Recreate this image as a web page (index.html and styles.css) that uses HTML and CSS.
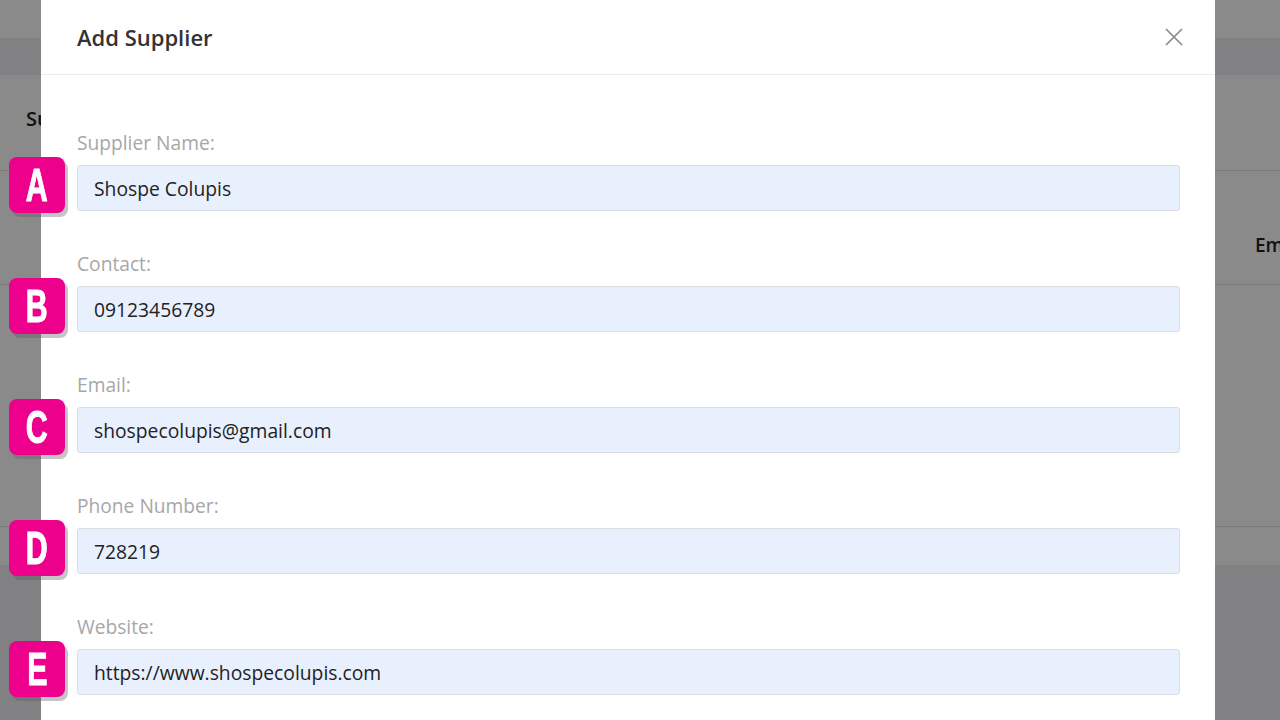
FILE: index.html
```html
<!doctype html>
<html lang="en">
  <head>
    <meta charset="UTF-8">
    <meta name="viewport" content="width=device-width, initial-scale=1.0">
    <title>Add Supplier</title>
    <link rel="stylesheet" href="styles.css">
  </head>
  <body>
    <!-- page behind the modal -->
    <div class="page">
      <div class="topbar"></div>
      <div class="subbar"></div>
      <div class="content">
        <h2 class="page-title">Suppliers</h2>
        <div class="table-card">
          <div class="table-head">
            <span class="th">Email</span>
          </div>
          <div class="table-body"></div>
          <div class="table-foot"></div>
        </div>
      </div>
    </div>

    <div class="backdrop"></div>

    <div class="modal">
      <div class="modal-header">
        <h3 class="modal-title">Add Supplier</h3>
        <button class="close-btn" aria-label="Close">
          <svg width="18" height="18" viewBox="0 0 18 18">
            <path d="M1 1 L17 17 M17 1 L1 17" stroke="#8a8a8a" stroke-width="1.7" fill="none"/>
          </svg>
        </button>
      </div>
      <form class="modal-body">
        <div class="field">
          <span class="badge"><span>A</span></span>
          <label for="name">Supplier Name:</label>
          <input type="text" id="name" value="Shospe Colupis">
        </div>
        <div class="field">
          <span class="badge"><span>B</span></span>
          <label for="contact">Contact:</label>
          <input type="text" id="contact" value="09123456789">
        </div>
        <div class="field">
          <span class="badge"><span>C</span></span>
          <label for="email">Email:</label>
          <input type="text" id="email" value="shospecolupis@gmail.com">
        </div>
        <div class="field">
          <span class="badge"><span>D</span></span>
          <label for="phone">Phone Number:</label>
          <input type="text" id="phone" value="728219">
        </div>
        <div class="field">
          <span class="badge"><span>E</span></span>
          <label for="website">Website:</label>
          <input type="text" id="website" value="https://www.shospecolupis.com">
        </div>
      </form>
    </div>
  </body>
</html>
```

FILE: styles.css
```css
body {
  margin: 0;
  font-family: 'Open Sans', 'Noto Sans', sans-serif;
  background: #fff;
  overflow: hidden;
  height: 720px;
}

/* underlying page */
.page {
  height: 720px;
  display: flex;
  flex-direction: column;
  background: #eeeff2;
}
.topbar {
  height: 38px;
  background: #fff;
}
.subbar {
  height: 37px;
  background: #eeeff2;
}
.content {
  background: #fff;
  flex: 0 0 490px;
  display: flex;
  flex-direction: column;
}
.page-title {
  margin: 0;
  padding: 30px 26px 0;
  height: 65px;
  font-size: 20px;
  font-weight: 600;
  color: #222;
}
.table-card {
  border-top: 1px solid #e4e4e4;
  flex: 1;
  display: flex;
  flex-direction: column;
}
.table-head {
  height: 114px;
  border-bottom: 1px solid #e4e4e4;
  display: flex;
  align-items: flex-end;
  justify-content: flex-end;
  padding-bottom: 26px;
  box-sizing: border-box;
}
.th {
  font-size: 19px;
  font-weight: 600;
  color: #222;
  width: 25px;
  overflow: hidden;
  white-space: nowrap;
}
.table-body {
  height: 241px;
  border-bottom: 1px solid #e4e4e4;
}
.table-foot {
  height: 38px;
  background: #fff;
}

.backdrop {
  position: fixed;
  inset: 0;
  background: rgba(0, 0, 0, 0.46);
}

/* modal */
.modal {
  position: fixed;
  top: 0;
  left: 41px;
  width: 1174px;
  height: 720px;
  background: #fff;
}
.modal-header {
  height: 74px;
  border-bottom: 1px solid #ebebeb;
  display: flex;
  align-items: center;
  justify-content: space-between;
  padding: 0 32px 0 36px;
}
.modal-title {
  margin: 0;
  font-size: 22px;
  font-weight: 600;
  color: #333;
}
.close-btn {
  background: none;
  border: none;
  padding: 0;
  width: 18px;
  height: 18px;
  cursor: pointer;
}

.modal-body {
  padding: 57px 35px 0 36px;
  display: flex;
  flex-direction: column;
  gap: 42px;
}
.field {
  position: relative;
}
.field label {
  display: block;
  font-size: 19.2px;
  line-height: 22px;
  color: #a7a7a7;
  margin-bottom: 11px;
}
.field input {
  display: block;
  width: 100%;
  box-sizing: border-box;
  height: 46px;
  padding: 0 16px;
  font-family: inherit;
  font-size: 19.3px;
  color: #222;
  background: #e8f0fe;
  border: 1px solid #dcdde0;
  border-radius: 3px;
  outline: none;
}

.badge {
  position: absolute;
  left: -68px;
  top: 25px;
  width: 56px;
  height: 56px;
  border-radius: 8px;
  background: #ec008c;
  box-shadow: 3px 4px 0 rgba(90, 90, 90, 0.35);
  color: #fff;
  display: flex;
  align-items: center;
  justify-content: center;
  font-family: 'Liberation Sans', 'DejaVu Sans', sans-serif;
  font-weight: bold;
  font-size: 46px;
}
.badge span {
  display: inline-block;
  transform: scaleX(0.66);
  -webkit-text-stroke: 1px #fff;
}
```
